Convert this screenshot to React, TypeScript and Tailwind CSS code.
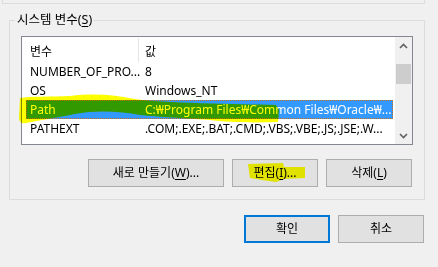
import React from 'react'

const FONT = { fontFamily: '"Noto Sans", "Noto Sans CJK KR", sans-serif' }

const ROWS = [
  { name: 'NUMBER_OF_PRO...', value: '8' },
  { name: 'OS', value: 'Windows_NT' },
  { name: 'Path', value: 'C:₩Program Files₩Common Files₩Oracle₩...', selected: true },
  { name: 'PATHEXT', value: '.COM;.EXE;.BAT;.CMD;.VBS;.VBE;.JS;.JSE;.W...' },
]

function Chevron({ up }: { up?: boolean }) {
  return (
    <svg width="9" height="6" viewBox="0 0 9 6" className="block">
      <path
        d={up ? 'M1 5 L4.5 1.5 L8 5' : 'M1 1 L4.5 4.5 L8 1'}
        fill="none"
        stroke="#606060"
        strokeWidth="1.6"
      />
    </svg>
  )
}

function Btn({ children, w, primary }: { children: React.ReactNode; w: string; primary?: boolean }) {
  return (
    <div
      className={`${w} h-[28px] flex items-center justify-center bg-[#e1e1e1] text-[12px] text-black ${
        primary ? 'border-2 border-[#0078d7]' : 'border border-[#adadad]'
      }`}
    >
      {children}
    </div>
  )
}

export default function App() {
  return (
    <div className="relative w-[438px] h-[267px] bg-[#f0f0f0] overflow-hidden isolate" style={FONT}>
      {/* previous group, cut off at the top */}
      <div className="ml-[2px] w-[423px] h-[4px] border-x border-b border-[#dcdcdc]" />

      {/* system variables group */}
      <div className="relative mt-[16px] ml-[9px] w-[416px] h-[180px] border border-[#dcdcdc]">
        <span className="absolute -top-[10px] left-[5px] px-[2px] bg-[#f0f0f0] text-[12.5px] leading-[18px] text-black">
          시스템 변수(<span className="underline underline-offset-2">S</span>)
        </span>

        <div className="ml-[11px] mt-[15px] w-[392px] h-[109px] border border-[#828790] bg-white flex overflow-hidden">
          <div className="flex-1 flex flex-col text-[12px] leading-[19px] text-black">
            <div className="h-[25px] shrink-0 flex items-center">
              <span className="w-[116px] pl-[8px] pt-[3px]">변수</span>
              <span className="w-px h-[24px] bg-[#e5e5e5] mt-[1px]" />
              <span className="pl-[6px] pt-[3px]">값</span>
            </div>
            {ROWS.map((r) => (
              <div
                key={r.name}
                className={`ml-[4px] w-[367px] h-[19px] shrink-0 flex items-center whitespace-nowrap ${
                  r.selected ? 'bg-[#3399ff] text-white border border-dotted border-[#cc6a1a]' : 'border border-transparent'
                }`}
              >
                <span className="w-[118px] pl-[3px] shrink-0">{r.name}</span>
                <span>{r.value}</span>
              </div>
            ))}
          </div>
          <div className="w-[17px] shrink-0 bg-[#f0f0f0] flex flex-col items-center">
            <div className="h-[17px] flex items-center justify-center">
              <Chevron up />
            </div>
            <div className="mt-[10px] w-[15px] h-[20px] bg-[#cdcdcd]" />
            <div className="mt-auto h-[17px] flex items-center justify-center">
              <Chevron />
            </div>
          </div>
        </div>

        <div className="mt-[14px] ml-[78px] flex gap-[8px]">
          <Btn w="w-[136px]">
            새로 만들기(<span className="underline underline-offset-2">W</span>)...
          </Btn>
          <Btn w="w-[86px]">
            편집(<span className="underline underline-offset-2">I</span>)...
          </Btn>
          <Btn w="w-[86px]">
            삭제(<span className="underline underline-offset-2">L</span>)
          </Btn>
        </div>
      </div>

      <div className="mt-[15px] ml-[244px] flex gap-[8px]">
        <Btn w="w-[86px]" primary>
          확인
        </Btn>
        <Btn w="w-[86px]">취소</Btn>
      </div>

      {/* highlighter marks */}
      <svg
        className="absolute inset-0 pointer-events-none mix-blend-multiply"
        width="438"
        height="267"
        viewBox="0 0 438 267"
      >
        <path
          d="M20 98 C30 96 50 97 70 96 C95 93 115 95 135 99 C160 103 240 104 276 105 L279 110 L278 122 C250 123 225 122 210 120 C180 118 160 117 140 115 C120 111 95 110 75 114 C55 118 40 120 26 123 C22 124 19 122 19 118 Z"
          fill="#ffff00"
        />
        <path
          d="M248 164 L283 163 L284 167 L305 167 L305 178 L284 179 L276 182 L262 180 L250 178 Z"
          fill="#ffff00"
        />
      </svg>
    </div>
  )
}
